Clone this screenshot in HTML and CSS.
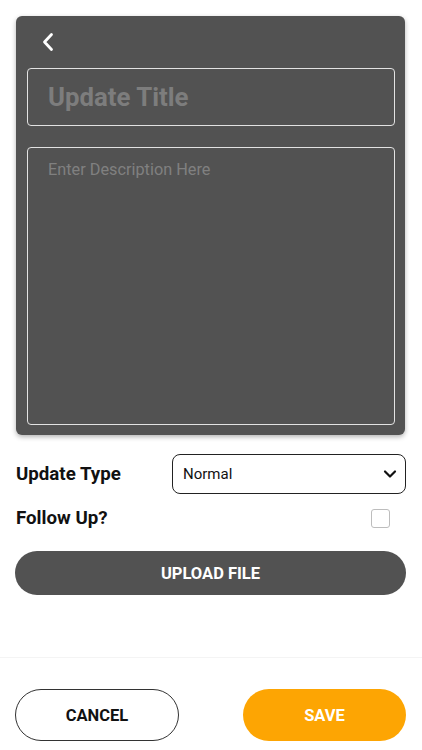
FILE: index.html
```html
<!DOCTYPE html>
<html>
<head>
<meta charset="utf-8">
<link rel="stylesheet" href="styles.css">
</head>
<body>
<div class="page">
  <div class="card">
    <div class="back-row">
      <svg class="back" width="14" height="20" viewBox="0 0 14 20"><path d="M10.5 2.5 L3.5 10 L10.5 17.5" fill="none" stroke="#fff" stroke-width="2.8" stroke-linecap="round" stroke-linejoin="round"/></svg>
    </div>
    <div class="title-input">Update Title</div>
    <div class="desc-input">Enter Description Here</div>
  </div>
  <div class="form">
    <div class="row type-row">
      <div class="label">Update Type</div>
      <div class="select">
        <span>Normal</span>
        <svg width="14" height="10" viewBox="0 0 14 10"><path d="M2 2.5 L7 7.5 L12 2.5" fill="none" stroke="#111" stroke-width="2.2" stroke-linecap="round" stroke-linejoin="round"/></svg>
      </div>
    </div>
    <div class="row follow-row">
      <div class="label">Follow Up?</div>
      <div class="checkbox"></div>
    </div>
    <div class="upload">UPLOAD FILE</div>
  </div>
  <div class="footer">
    <div class="btn cancel">CANCEL</div>
    <div class="btn save">SAVE</div>
  </div>
</div>
</body>
</html>
```
FILE: styles.css
```css
* { box-sizing: border-box; }
html, body { margin: 0; padding: 0; background: #fff; }
body { font-family: Roboto, "Noto Sans", Arial, sans-serif; }
.page {
  width: 422px;
  height: 750px;
  display: flex;
  flex-direction: column;
  overflow: hidden;
}
.card {
  margin: 16px 17px 0 16px;
  height: 419px;
  background: #525252;
  border-radius: 6px;
  padding: 0 10px 10px 11px;
  box-shadow: 0 2px 5px rgba(0,0,0,0.3);
  display: flex;
  flex-direction: column;
}
.back-row {
  height: 52px;
  display: flex;
  align-items: center;
  padding-left: 14px;
}
.back { display: block; }
.title-input {
  height: 58px;
  border: 1px solid #e2e2e2;
  border-radius: 4px;
  padding-left: 20px;
  display: flex;
  align-items: center;
  font-size: 25.8px;
  font-weight: 700;
  color: #7d7d7d;
}
.desc-input {
  margin-top: 21px;
  flex: 1;
  border: 1px solid #e2e2e2;
  border-radius: 4px;
  padding: 12px 20px;
  font-size: 16.3px;
  color: #808080;
}
.form {
  padding: 0 16px 0 15px;
}
.row {
  display: flex;
  align-items: center;
  justify-content: space-between;
}
.label {
  font-size: 18.7px;
  font-weight: 700;
  color: #111;
  padding-left: 1px;
}
.type-row { margin-top: 19px; }
.select {
  width: 234px;
  height: 40px;
  border: 1px solid #222;
  border-radius: 8px;
  display: flex;
  align-items: center;
  justify-content: space-between;
  padding: 0 8px 0 10px;
  font-size: 15px;
  color: #111;
}
.select svg { display: block; }
.follow-row { margin-top: 10px; height: 28px; }
.checkbox {
  width: 19px;
  height: 19px;
  border: 1.5px solid #bdbdbd;
  border-radius: 3px;
  margin-right: 16px;
}
.upload {
  margin-top: 19px;
  height: 44px;
  border-radius: 22px;
  background: #525252;
  color: #fff;
  font-weight: 700;
  font-size: 16.5px;
  display: flex;
  align-items: center;
  justify-content: center;
}
.footer {
  margin-top: auto;
  height: 93px;
  border-top: 1px solid #f4f4f4;
  padding: 31px 16px 0 15px;
  display: flex;
  justify-content: space-between;
}
.btn {
  width: 164px;
  height: 52px;
  border-radius: 26px;
  display: flex;
  align-items: center;
  justify-content: center;
  font-weight: 700;
  font-size: 16.5px;
}
.cancel {
  border: 1px solid #333;
  color: #111;
}
.save {
  width: 163px;
  background: #fda503;
  color: #fff;
}
```
